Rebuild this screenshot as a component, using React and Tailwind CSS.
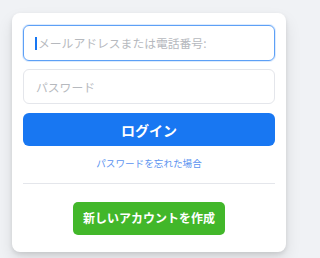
import React from 'react';

const font = { fontFamily: '"Noto Sans CJK JP", "Noto Sans", sans-serif' };

export default function App() {
  return (
    <div className="w-full min-h-screen bg-[#f0f2f5] pt-[13px] pl-[12px]" style={font}>
      <div className="w-[274px] h-[239px] bg-white rounded-[8px] shadow-[0_2px_4px_rgba(0,0,0,0.1),0_8px_16px_rgba(0,0,0,0.1)] px-[11px] pt-[12px] flex flex-col">
        {/* Email (focused) */}
        <div className="h-[36px] rounded-[6px] border border-[#1877f2]/70 shadow-[0_0_0_1px_rgba(24,119,242,0.15)] flex items-center pl-[11px]">
          <span className="w-[2px] h-[13px] bg-[#1877f2] mr-[1px]" />
          <span className="text-[11.8px] text-[#b6b9be] leading-none">メールアドレスまたは電話番号:</span>
        </div>

        {/* Password */}
        <div className="mt-[8px] h-[35px] rounded-[6px] border border-[#e4e6eb] flex items-center pl-[12px]">
          <span className="text-[11.8px] text-[#b6b9be] leading-none">パスワード</span>
        </div>

        {/* Login */}
        <button className="mt-[9px] h-[33px] rounded-[6px] bg-[#1877f2] text-white font-bold text-[14px] leading-none">
          ログイン
        </button>

        <div className="mt-[13px] text-center text-[9.6px] text-[#5b93f0] leading-none">
          パスワードを忘れた場合
        </div>

        <div className="mt-[14px] h-px bg-[#e4e6eb]" />

        <div className="flex justify-center mt-[18px]">
          <button className="w-[152px] h-[33px] rounded-[5px] bg-[#42b72a] text-white font-bold text-[12px] leading-none">
            新しいアカウントを作成
          </button>
        </div>
      </div>
    </div>
  );
}
